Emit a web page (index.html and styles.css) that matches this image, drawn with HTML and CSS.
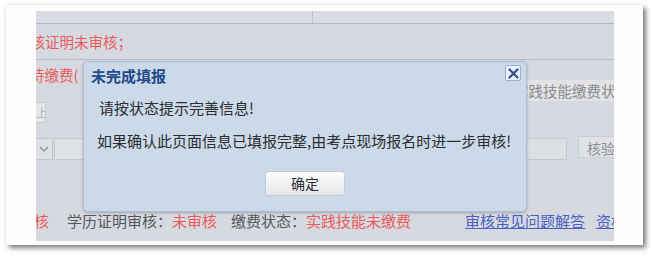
FILE: index.html
```html
<!DOCTYPE html>
<html lang="zh-CN">
<head>
<meta charset="utf-8">
<title>未完成填报</title>
<link rel="stylesheet" href="styles.css">
</head>
<body>
<div class="card">
  <div class="shot">
    <div class="topbar"><div class="cell"></div></div>
    <div class="row1"><span class="red clipped">审核证明未审核；</span></div>
    <div class="row2">
      <div class="lead"><span class="red clipped">待缴费(</span></div>
      <div class="graybtn">实践技能缴费状态</div>
    </div>
    <div class="row3"><div class="smallbox">上</div></div>
    <div class="row4">
      <div class="select"><svg width="10" height="6" viewBox="0 0 10 6"><path d="M1 1 L5 5 L9 1" fill="none" stroke="#8a9099" stroke-width="1.4"/></svg></div>
      <div class="input small"></div>
      <div class="input right"></div>
      <div class="btn">核验</div>
    </div>
    <div class="row5">
      <span class="red first">核</span>
      <span class="label l1">学历证明审核：</span><span class="red">未审核</span>
      <span class="label l2">缴费状态：</span><span class="red">实践技能未缴费</span>
      <a class="link l3">审核常见问题解答</a>
      <a class="link l4">资格审核</a>
    </div>

    <div class="dialog">
      <div class="dhead">
        <span class="dtitle">未完成填报</span>
        <span class="dclose"><svg width="11" height="11" viewBox="0 0 11 11"><path d="M1.5 1.5 L9.5 9.5 M9.5 1.5 L1.5 9.5" stroke="#2d4f8f" stroke-width="2.2" stroke-linecap="round"/></svg></span>
      </div>
      <p class="msg m1">请按状态提示完善信息!</p>
      <p class="msg m2">如果确认此页面信息已填报完整,由考点现场报名时进一步审核!</p>
      <div class="dfoot"><span class="okbtn">确定</span></div>
    </div>
  </div>
</div>
</body>
</html>
```

FILE: styles.css
```css
html, body {
  margin: 0;
  padding: 0;
  background: #ffffff;
}
body {
  width: 653px;
  height: 256px;
  overflow: hidden;
  font-family: "Noto Sans CJK SC", "Noto Sans", "DejaVu Sans", sans-serif;
}
.card {
  margin: 5px 0 0 6px;
  width: 637px;
  height: 240px;
  box-sizing: border-box;
  padding: 6px 29px 4px 30px;
  background: #fefefe;
  box-shadow: 3px 3px 5px rgba(0, 0, 0, 0.5), 0 0 2px rgba(0, 0, 0, 0.12);
}
.shot {
  position: relative;
  width: 578px;
  height: 230px;
  overflow: hidden;
  background: #d6dae0;
}
.topbar {
  height: 12px;
  border-bottom: 1px solid #b4b9c1;
  background: #d9dde3;
  display: flex;
}
.topbar .cell {
  width: 276px;
  border-right: 1px solid #bfc3c9;
}
.red { color: #ea5b5d; }
.row1 {
  height: 35px;
  line-height: 35px;
  font-size: 14.5px;
  border-bottom: 1px solid #b9bec6;
  white-space: nowrap;
}
.row1 .clipped { margin-left: -20px; }
.row2, .row4, .row5 {
  display: flex;
  white-space: nowrap;
}
.row2 > *, .row4 > *, .row5 > * {
  flex-shrink: 0;
}
.row2 {
  height: 42px;
}
.row2 .lead {
  width: 476px;
  line-height: 30px;
  font-size: 14.5px;
}
.row2 .clipped { margin-left: -6px; }
.graybtn {
  margin-top: 20px;
  height: 21px;
  line-height: 21px;
  padding-left: 2px;
  background: #e2e3e5;
  color: #8a8c90;
  font-size: 14.5px;
  width: 130px;
}
.row3 {
  height: 20px;
}
.smallbox {
  width: 9px;
  height: 19px;
  line-height: 19px;
  background: #e4e6e9;
  border: 1px solid #c6cad0;
  border-left: none;
  color: #b0b3b8;
  font-size: 12px;
  overflow: hidden;
  white-space: nowrap;
}
.row4 {
  margin-top: 16px;
  height: 22px;
}
.select {
  width: 16px;
  height: 20px;
  border: 1px solid #c3c7cd;
  border-left: none;
  background: #dde0e5;
  display: flex;
  align-items: center;
  justify-content: center;
}
.input {
  height: 20px;
  border: 1px solid #c5c9cf;
  background: #dee1e6;
}
.input.small { width: 30px; margin-left: 1px; }
.input.right { width: 40px; margin-left: 439px; background: #dcdfe4; }
.btn {
  margin-left: 11px;
  width: 60px;
  height: 22px;
  margin-top: -2px;
  line-height: 22px;
  border: 1px solid #ccd0d5;
  background: #e0e2e5;
  color: #8d9095;
  font-size: 14px;
  padding-left: 8px;
  box-sizing: border-box;
}
.row5 {
  margin-top: 51px;
  height: 20px;
  line-height: 20px;
  font-size: 15px;
}
.row5 .first { margin-left: -2px; }
.label { color: #54575c; }
.l1 { margin-left: 18px; }
.l2 { margin-left: 14px; }
.link {
  color: #4b5fc4;
  text-decoration: underline;
  font-size: 15px;
}
.l3 { margin-left: 54px; }
.l4 { margin-left: 11px; }

.dialog {
  position: absolute;
  left: 47px;
  top: 50px;
  width: 444px;
  height: 151px;
  box-sizing: border-box;
  background: #ccd9e8;
  border: 1px solid #aebdd0;
  border-radius: 5px;
  box-shadow: 0 1px 3px rgba(0, 0, 0, 0.25);
}
.dhead {
  display: flex;
  justify-content: space-between;
  align-items: flex-start;
  height: 28px;
}
.dtitle {
  margin: 4px 0 0 7px;
  font-size: 15px;
  line-height: 20px;
  font-weight: bold;
  color: #1f4b8a;
}
.dclose {
  margin: 3px 5px 0 0;
  width: 16px;
  height: 16px;
  box-sizing: border-box;
  border: 1px solid #9fb2cc;
  border-radius: 2px;
  background: #eaf0f8;
  display: flex;
  align-items: center;
  justify-content: center;
}
.msg {
  margin: 0;
  font-size: 15px;
  color: #2b2d30;
  line-height: 20px;
}
.m1 { margin-top: 8px; padding-left: 15px; }
.m2 { margin-top: 13px; padding-left: 13px; }
.dfoot {
  margin-top: 21px;
  display: flex;
  justify-content: center;
}
.okbtn {
  width: 78px;
  height: 23px;
  line-height: 23px;
  text-align: center;
  font-size: 14px;
  color: #2b2d30;
  background: linear-gradient(#fdfdfd, #e4e6e9);
  border-radius: 3px;
  box-shadow: 0 0 0 1px #c4cbd6;
}
```
